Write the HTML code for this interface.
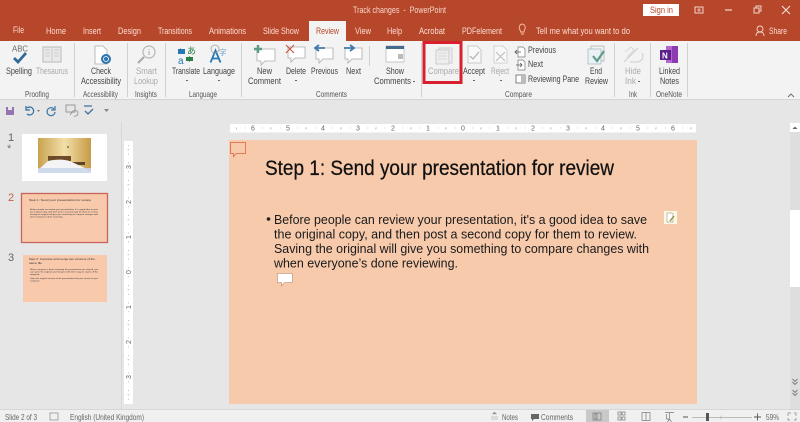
<!DOCTYPE html>
<html><head><meta charset="utf-8"><style>
html,body{margin:0;padding:0;background:#e6e6e6;overflow:hidden}
svg{display:block}
text{font-family:"Liberation Sans",sans-serif}
.t{font-size:9px;fill:#fbdcd2}
.r{font-size:9px;fill:#444}
.d{font-size:9px;fill:#aaa}
.g{font-size:8.5px;fill:#555}
.m{font-size:7px;fill:#666}
.s{font-size:8.5px;fill:#666}
.th{fill:#333}
</style></head><body>
<svg width="800" height="422" viewBox="0 0 800 422" xmlns="http://www.w3.org/2000/svg">
<defs><linearGradient id="w" x1="0" y1="0" x2="1" y2="0"><stop offset="0" stop-color="#c9a24f"/><stop offset=".5" stop-color="#f3dfa8"/><stop offset="1" stop-color="#c69a45"/></linearGradient></defs>
<rect width="800" height="422" fill="#e6e6e6"/>
<!-- title bar -->
<rect width="800" height="41" fill="#b7472a"/>
<text x="353" y="13" font-size="9.2" fill="#f6d5ca" textLength="93" lengthAdjust="spacingAndGlyphs" xml:space="preserve">Track changes  -  PowerPoint</text>
<rect x="643" y="4" width="36" height="12" fill="#fff"/>
<text x="650" y="13" font-size="9" fill="#b7472a" textLength="23" lengthAdjust="spacingAndGlyphs">Sign in</text>
<rect x="695" y="7" width="8" height="6" fill="none" stroke="#f3d6cc"/><path d="M697 10h4M699 8v4" stroke="#f3d6cc" stroke-width=".8"/>
<path d="M725 10h7" stroke="#f3d6cc" stroke-width="1.2"/>
<path d="M754 8h5v5h-5zM756 8V6h5v5h-2" fill="none" stroke="#f3d6cc"/>
<path d="M782 6l8 8M790 6l-8 8" stroke="#f6e0d8" stroke-width="1.1"/>
<!-- tabs -->
<rect x="309" y="21" width="37" height="20" fill="#f3f3f3"/>
<text class="t" x="13" y="33" textLength="11" lengthAdjust="spacingAndGlyphs">File</text>
<text class="t" x="46" y="34" textLength="20" lengthAdjust="spacingAndGlyphs">Home</text>
<text class="t" x="83" y="34" textLength="18" lengthAdjust="spacingAndGlyphs">Insert</text>
<text class="t" x="118" y="34" textLength="23" lengthAdjust="spacingAndGlyphs">Design</text>
<text class="t" x="158" y="34" textLength="34" lengthAdjust="spacingAndGlyphs">Transitions</text>
<text class="t" x="209" y="34" textLength="37" lengthAdjust="spacingAndGlyphs">Animations</text>
<text class="t" x="263" y="34" textLength="36" lengthAdjust="spacingAndGlyphs">Slide Show</text>
<text x="316" y="34" font-size="9" fill="#b7472a" textLength="23" lengthAdjust="spacingAndGlyphs">Review</text>
<text class="t" x="355" y="34" textLength="16" lengthAdjust="spacingAndGlyphs">View</text>
<text class="t" x="387" y="34" textLength="15" lengthAdjust="spacingAndGlyphs">Help</text>
<text class="t" x="419" y="34" textLength="26" lengthAdjust="spacingAndGlyphs">Acrobat</text>
<text class="t" x="462" y="34" textLength="40" lengthAdjust="spacingAndGlyphs">PDFelement</text>
<path d="M521 35h3M519.500 30a3 3.500 0 1 1 5.500 0c-.6 1-1 1.500-1 3h-3.500c0-1.500-.4-2-1-3z" fill="none" stroke="#f7c9a8" stroke-width=".9" transform="translate(0 -1)"/>
<text class="t" x="536" y="34" textLength="94" lengthAdjust="spacingAndGlyphs">Tell me what you want to do</text>
<circle cx="760" cy="29" r="3" fill="none" stroke="#f3d6cc" stroke-width=".9"/><path d="M756 36c0-3 2-4 4-4s4 1 4 4" fill="none" stroke="#f3d6cc" stroke-width=".9"/>
<text class="t" x="769" y="34" textLength="18" lengthAdjust="spacingAndGlyphs">Share</text>
<!-- ribbon -->
<rect y="41" width="800" height="58" fill="#f3f3f3"/>
<rect y="99" width="800" height="1" fill="#d4d4d4"/>
<g fill="#d0d0d0"><rect x="74" y="43" width="1" height="54"/><rect x="127" y="43" width="1" height="54"/><rect x="165" y="43" width="1" height="54"/><rect x="241" y="43" width="1" height="54"/><rect x="369" y="46" width="1" height="20"/><rect x="421" y="43" width="1" height="54"/><rect x="614" y="43" width="1" height="54"/><rect x="650" y="43" width="1" height="54"/><rect x="687" y="43" width="1" height="54"/></g>
<!-- ribbon labels -->
<text class="r" x="6" y="74" textLength="26" lengthAdjust="spacingAndGlyphs">Spelling</text>
<text class="d" x="36" y="74" textLength="32" lengthAdjust="spacingAndGlyphs">Thesaurus</text>
<text class="r" x="91" y="74" textLength="20" lengthAdjust="spacingAndGlyphs">Check</text>
<text class="r" x="81" y="84" textLength="40" lengthAdjust="spacingAndGlyphs">Accessibility</text>
<text class="d" x="136" y="74" textLength="21" lengthAdjust="spacingAndGlyphs">Smart</text>
<text class="d" x="134" y="84" textLength="24" lengthAdjust="spacingAndGlyphs">Lookup</text>
<text class="r" x="172" y="74" textLength="28" lengthAdjust="spacingAndGlyphs">Translate</text>
<text class="r" x="203" y="74" textLength="32" lengthAdjust="spacingAndGlyphs">Language</text>
<text class="r" x="257" y="74" textLength="15" lengthAdjust="spacingAndGlyphs">New</text>
<text class="r" x="248" y="84" textLength="33" lengthAdjust="spacingAndGlyphs">Comment</text>
<text class="r" x="286" y="74" textLength="20" lengthAdjust="spacingAndGlyphs">Delete</text>
<text class="r" x="311" y="74" textLength="27" lengthAdjust="spacingAndGlyphs">Previous</text>
<text class="r" x="346" y="74" textLength="15" lengthAdjust="spacingAndGlyphs">Next</text>
<text class="r" x="386" y="74" textLength="18" lengthAdjust="spacingAndGlyphs">Show</text>
<text class="r" x="374" y="84" textLength="37" lengthAdjust="spacingAndGlyphs">Comments</text>
<text class="d" x="428" y="74" textLength="31" lengthAdjust="spacingAndGlyphs">Compare</text>
<text class="r" x="463" y="74" textLength="22" lengthAdjust="spacingAndGlyphs">Accept</text>
<text class="d" x="491" y="74" textLength="18" lengthAdjust="spacingAndGlyphs">Reject</text>
<text class="r" x="528" y="53" textLength="28" lengthAdjust="spacingAndGlyphs">Previous</text>
<text class="r" x="528" y="67" textLength="15" lengthAdjust="spacingAndGlyphs">Next</text>
<text class="r" x="528" y="82" textLength="51" lengthAdjust="spacingAndGlyphs">Reviewing Pane</text>
<text class="r" x="590" y="74" textLength="12" lengthAdjust="spacingAndGlyphs">End</text>
<text class="r" x="585" y="84" textLength="23" lengthAdjust="spacingAndGlyphs">Review</text>
<text class="d" x="625" y="74" textLength="16" lengthAdjust="spacingAndGlyphs">Hide</text>
<text class="d" x="625" y="84" textLength="11" lengthAdjust="spacingAndGlyphs">Ink</text>
<text class="r" x="659" y="74" textLength="21" lengthAdjust="spacingAndGlyphs">Linked</text>
<text class="r" x="660" y="84" textLength="19" lengthAdjust="spacingAndGlyphs">Notes</text>
<text class="g" x="25" y="97" textLength="24" lengthAdjust="spacingAndGlyphs">Proofing</text>
<text class="g" x="83" y="97" textLength="35" lengthAdjust="spacingAndGlyphs">Accessibility</text>
<text class="g" x="135" y="97" textLength="22" lengthAdjust="spacingAndGlyphs">Insights</text>
<text class="g" x="189" y="97" textLength="28" lengthAdjust="spacingAndGlyphs">Language</text>
<text class="g" x="316" y="97" textLength="31" lengthAdjust="spacingAndGlyphs">Comments</text>
<text class="g" x="505" y="97" textLength="27" lengthAdjust="spacingAndGlyphs">Compare</text>
<text class="g" x="629" y="97" textLength="8" lengthAdjust="spacingAndGlyphs">Ink</text>
<text class="g" x="656" y="97" textLength="26" lengthAdjust="spacingAndGlyphs">OneNote</text>
<path d="M186 80h2v1h-2zM218 80h2v1h-2zM295 80h2v1h-2zM413 81h2v1h-2zM473 80h2v1h-2zM500 80h2v1h-2zM638 81h2v1h-2z" fill="#666"/>
<!-- proofing icons -->
<text x="12" y="51.500" font-size="8.500" fill="#666" textLength="16" lengthAdjust="spacingAndGlyphs">ABC</text>
<path d="M14 58l4 4 8-9" fill="none" stroke="#2f6a99" stroke-width="2.800"/>
<rect x="43" y="47" width="18" height="15" fill="#e9e9e9" stroke="#bbb"/><path d="M52 47v15M45 50h5M45 53h5M45 56h5M54 50h5M54 53h5M54 56h5" stroke="#c4c4c4" stroke-width=".8"/>
<path d="M95 46h8l4 4v14H95z" fill="#fff" stroke="#aaa" stroke-width=".8"/>
<circle cx="106" cy="59" r="5" fill="#2f75ad"/><circle cx="106" cy="59" r="2.500" fill="none" stroke="#fff" stroke-width=".8"/>
<circle cx="149" cy="52" r="6" fill="#f3f3f3" stroke="#b5b5b5" stroke-width="1.200"/><path d="M144 57l-6 6" stroke="#aaa" stroke-width="2"/><path d="M149 49v1M149 51v4" stroke="#aaa"/>
<!-- translate -->
<path d="M178 49h7v5h-7zM178 51l3-3v6z" fill="#2878b5"/><path d="M186 57h7v4h-7z" fill="#2a7d46"/><path d="M186 59l4-3v6z" fill="#2a7d46"/>
<text x="187" y="54" font-size="9" fill="#2a7d46" style="font-family:'Noto Sans CJK JP',sans-serif">あ</text>
<text x="178" y="64" font-size="10" fill="#2878b5">a</text>
<path d="M211 60l5-12 5 12M213 56h6" fill="none" stroke="#2878b5" stroke-width="1.800" transform="translate(-.5 2.500)"/>
<circle cx="215" cy="49" r="4" fill="none" stroke="#999" stroke-width=".7"/>
<text x="219" y="55" font-size="7.500" fill="#5b9bc8" style="font-family:'Noto Sans CJK JP',sans-serif">字</text>
<!-- comments -->
<path d="M257 49h18v12h-10l-4 4v-4h-4z" fill="#fff" stroke="#aaa" stroke-width=".8"/><path d="M258 45v8M254 49h8" stroke="#5a9d82" stroke-width="2.400"/>
<path d="M288 47h17v11h-10l-4 4v-4h-3z" fill="#fff" stroke="#aaa" stroke-width=".8"/><path d="M286 45l8 8M294 45l-8 8" stroke="#c8503c" stroke-width="1.100"/>
<path d="M316 48h17v11h-10l-4 4v-4h-3z" fill="#fff" stroke="#aaa" stroke-width=".8"/><path d="M325 48h-10M319 45l-4 3 4 3" fill="none" stroke="#3f79ab" stroke-width="1.800"/>
<path d="M345 48h17v11h-10l-4 4v-4h-3z" fill="#fff" stroke="#aaa" stroke-width=".8"/><path d="M344 48h10M350 45l4 3-4 3" fill="none" stroke="#3f79ab" stroke-width="1.800"/>
<rect x="386" y="46" width="18" height="16" fill="#fff" stroke="#bbb" stroke-width=".8"/><rect x="386" y="46" width="18" height="3" fill="#44698c"/><rect x="398" y="54" width="5" height="5" fill="#bbb"/>
<!-- compare -->
<rect x="439" y="48" width="13" height="15" fill="#eee" stroke="#ccc"/><rect x="436" y="50" width="13" height="14" fill="#eee" stroke="#ccc"/><path d="M438 53h9M438 56h9M438 59h9" stroke="#d4d4d4" stroke-width=".8"/>
<path d="M468 46h9l4 4v13h-13z" fill="#f8f8f8" stroke="#bdbdbd" stroke-width=".8"/><path d="M470 56l3 3 6-7" fill="none" stroke="#aaa" stroke-width="1.100"/>
<path d="M494 46h9l4 4v13h-13z" fill="#f8f8f8" stroke="#c8c8c8" stroke-width=".8"/><path d="M496 52l9 9M505 52l-9 9" stroke="#bbb" stroke-width="1"/>
<path d="M518 47h5l2 2v8h-7z" fill="#fff" stroke="#777" stroke-width=".7"/><path d="M515 52h6M517 50l-2 2 2 2" fill="none" stroke="#555" stroke-width=".8"/>
<path d="M518 60h5l2 2v8h-7z" fill="#fff" stroke="#777" stroke-width=".7"/><path d="M516 65h6M520 63l2 2-2 2" fill="none" stroke="#555" stroke-width=".8"/>
<rect x="516" y="75" width="9" height="8" fill="#fff" stroke="#666" stroke-width=".8"/><rect x="521" y="75" width="4" height="8" fill="#bbb"/>
<rect x="591" y="46" width="13" height="15" fill="#f2f2f2" stroke="#aaa" stroke-width=".7"/><rect x="588" y="49" width="13" height="15" fill="#eaf2f6" stroke="#9fb5c0" stroke-width=".7"/><path d="M593 56l4 5 7-10" fill="none" stroke="#5f9d8a" stroke-width="2.200"/>
<path d="M624 62l14-14M630 62h8a6 6 0 0 0 4-9" fill="none" stroke="#ccc" stroke-width="1"/><path d="M625 52l6-5 3 3-7 7" fill="none" stroke="#d0d0d0" stroke-width=".8"/>
<rect x="666" y="46" width="12" height="17" fill="#b565d0"/><rect x="672" y="46" width="6" height="17" fill="#8a3bb0"/><rect x="660" y="50" width="11" height="10" fill="#5c1f8c"/>
<text x="662" y="58.500" font-size="8" font-weight="bold" fill="#fff">N</text>
<path d="M788 97l3-3 3 3" fill="none" stroke="#666" stroke-width=".9"/>
<!-- red box -->
<rect x="424" y="42.500" width="37" height="40" fill="none" stroke="#d71f2e" stroke-width="3"/>
<!-- QAT -->
<rect x="6" y="107" width="8" height="8" fill="#7a4f9f" opacity=".75"/><rect x="8" y="107" width="4" height="3" fill="#e6e6e6"/>
<path d="M26 108a4 4 0 1 1 0 6M25 106v4h4" fill="none" stroke="#2f6a9f" stroke-width="1.200" transform="translate(1 0)"/><path d="M37 110h3l-1.500 2z" fill="#777"/>
<path d="M54 109a4 4 0 1 0 1 3M55 106v4h-4" fill="none" stroke="#3a78a8" stroke-width="1.200"/>
<rect x="66" y="105" width="9" height="7" fill="none" stroke="#888" stroke-width=".8"/><path d="M70 115l2-3M74 116a3 3 0 1 0-2-3" fill="none" stroke="#888" stroke-width=".7"/>
<path d="M84 106h8M85 111l3 3 5-5" fill="none" stroke="#3f6f99" stroke-width="1.300"/>
<path d="M104 107h5M104 109h5l-2.500 3z" fill="#888"/>
<!-- left pane divider -->
<rect x="121" y="122" width="1" height="288" fill="#d8d8d8"/>
<!-- thumbnails -->
<text x="8" y="141" font-size="11" fill="#666">1</text><text x="7" y="152" font-size="11" fill="#777">*</text>
<text x="8" y="201" font-size="11" fill="#c0634a">2</text>
<text x="8" y="261" font-size="11" fill="#666">3</text>
<rect x="22" y="134" width="85" height="47" fill="#fff"/>
<rect x="38" y="138" width="53" height="35" fill="url(#w)"/>
<rect x="48" y="156" width="23" height="5" fill="#6d4a28"/><rect x="72" y="162" width="13" height="3" fill="#5e4526"/>
<path d="M38 170l10-9c8-2 18-2 24 1l19 9v2H38z" fill="#f4f4f6"/><rect x="38" y="168" width="53" height="5" fill="#c8d6ea" opacity=".85"/>
<circle cx="68" cy="147" r=".8" fill="#333"/>
<rect x="21.500" y="193.500" width="86" height="49" fill="#f9c9ac" stroke="#c8655a" stroke-width="1.300"/>
<text class="th" x="29" y="201" font-size="3.100" textLength="62" lengthAdjust="spacingAndGlyphs">Step 1: Send your presentation for review</text>
<g font-size="1.700"><text class="th" x="30" y="210" textLength="68" lengthAdjust="spacingAndGlyphs">Before people can review your presentation, it's a good idea to save</text>
<text class="th" x="30" y="212.500" textLength="68" lengthAdjust="spacingAndGlyphs">the original copy, and then post a second copy for them to review.</text>
<text class="th" x="30" y="215" textLength="68" lengthAdjust="spacingAndGlyphs">Saving the original will give you something to compare changes with</text>
<text class="th" x="30" y="217.500" textLength="33" lengthAdjust="spacingAndGlyphs">when everyone's done reviewing.</text></g>
<rect x="23" y="255" width="84" height="47" fill="#f9c9ac"/>
<text class="th" x="29" y="260" font-size="3.100" textLength="66" lengthAdjust="spacingAndGlyphs">Step 2: Compare and merge two versions of the</text>
<text class="th" x="29" y="264" font-size="3.100" textLength="13" lengthAdjust="spacingAndGlyphs">same file</text>
<g font-size="1.700"><text class="th" x="30" y="270" textLength="68" lengthAdjust="spacingAndGlyphs">When everyone is done reviewing the presentation you shared, you</text>
<text class="th" x="30" y="272.500" textLength="68" lengthAdjust="spacingAndGlyphs">can open the original and merge it with their copy or copies of the</text>
<text class="th" x="30" y="275" textLength="10" lengthAdjust="spacingAndGlyphs">original.</text>
<text class="th" x="30" y="279" textLength="68" lengthAdjust="spacingAndGlyphs">Open the original version of the presentation that you saved on your</text>
<text class="th" x="30" y="281.500" textLength="10" lengthAdjust="spacingAndGlyphs">computer.</text></g>
<!-- rulers -->
<rect x="230" y="124" width="466" height="8.500" fill="#fff"/>
<rect x="124" y="141" width="9" height="263" fill="#fff"/>
<g text-anchor="middle"><text class="m" x="253" y="130.500">6</text><text class="m" x="288" y="130.500">5</text><text class="m" x="323" y="130.500">4</text><text class="m" x="358" y="130.500">3</text><text class="m" x="393" y="130.500">2</text><text class="m" x="428" y="130.500">1</text><text class="m" x="463" y="130.500">0</text><text class="m" x="498" y="130.500">1</text><text class="m" x="533" y="130.500">2</text><text class="m" x="568" y="130.500">3</text><text class="m" x="603" y="130.500">4</text><text class="m" x="638" y="130.500">5</text><text class="m" x="673" y="130.500">6</text></g>
<path stroke="#999" stroke-width=".6" stroke-dasharray="1 7.750" d="M236 128H696"/>
<path stroke="#aaa" stroke-width="2" stroke-dasharray=".6 34.400" d="M270.500 128.500H696M236 128.500h1"/>
<g text-anchor="middle"><text class="m" transform="translate(131 167) rotate(-90)">3</text><text class="m" transform="translate(131 202) rotate(-90)">2</text><text class="m" transform="translate(131 237) rotate(-90)">1</text><text class="m" transform="translate(131 272) rotate(-90)">0</text><text class="m" transform="translate(131 307) rotate(-90)">1</text><text class="m" transform="translate(131 342) rotate(-90)">2</text><text class="m" transform="translate(131 377) rotate(-90)">3</text></g>
<path stroke="#999" stroke-width=".6" stroke-dasharray="1 7.750" d="M128.500 145V403"/>
<path stroke="#aaa" stroke-width="2" stroke-dasharray=".6 34.400" d="M128.500 149.500V403"/>
<!-- slide -->
<rect x="229" y="140" width="468" height="264" fill="#f7caac"/>
<path d="M230.500 142.500h15v11h-9l-3 3v-3h-3z" fill="none" stroke="#e0795a" stroke-width="1"/>
<text x="265" y="175" font-size="21" fill="#111" stroke="#111" stroke-width=".25" textLength="349" lengthAdjust="spacingAndGlyphs">Step 1: Send your presentation for review</text>
<circle cx="268.500" cy="219" r="1.800" fill="#222"/>
<g font-size="13" fill="#1a1a1a">
<text x="274" y="224" textLength="373" lengthAdjust="spacingAndGlyphs">Before people can review your presentation, it's a good idea to save</text>
<text x="274" y="238.500" textLength="363" lengthAdjust="spacingAndGlyphs">the original copy, and then post a second copy for them to review.</text>
<text x="274" y="253" textLength="375" lengthAdjust="spacingAndGlyphs">Saving the original will give you something to compare changes with</text>
<text x="274" y="267.500" textLength="184" lengthAdjust="spacingAndGlyphs">when everyone’s done reviewing.</text>
</g>
<path d="M277.500 273.500h15v9h-8l-3 3.500v-3.500h-4z" fill="#fff" stroke="#c9a08a" stroke-width=".8"/>
<rect x="664" y="211" width="13" height="13" fill="#fdf8e6"/>
<path d="M667 213h5l1 1v8h-6z" fill="#fff" stroke="#a8a890" stroke-width=".7"/><path d="M670 221l4-5" stroke="#7f8f3a" stroke-width="1.300"/>
<!-- scrollbar -->
<rect x="790" y="123" width="10" height="287" fill="#dedede"/>
<rect x="790" y="123" width="10" height="9" fill="#fff"/><path d="M792.500 129l2.500-2.500 2.500 2.500z" fill="#666"/>
<rect x="790" y="210" width="10" height="77" fill="#fff"/>
<path d="M792.500 379l2.500 2.500 2.500-2.500M792.500 382l2.500 2.500 2.500-2.500M792.500 390l2.500 2.500 2.500-2.500M792.500 393l2.500 2.500 2.500-2.500" fill="none" stroke="#777" stroke-width=".9"/>
<!-- status -->
<rect y="409" width="800" height="1" fill="#d6d6d6"/>
<rect y="410" width="800" height="12" fill="#f0f0f0"/>
<text class="s" x="5" y="420" textLength="32" lengthAdjust="spacingAndGlyphs">Slide 2 of 3</text>
<rect x="50" y="413" width="8" height="7" fill="none" stroke="#888" stroke-width=".7"/>
<text class="s" x="70" y="420" textLength="74" lengthAdjust="spacingAndGlyphs">English (United Kingdom)</text>
<path d="M491 419h7M491 417h7M494.500 412l-2 2h4z" stroke="#999" stroke-width=".6" fill="#999"/>
<text class="s" x="502" y="420" textLength="16" lengthAdjust="spacingAndGlyphs">Notes</text>
<path d="M531 414h8v5h-5l-2 2v-2h-1z" fill="#666"/>
<text class="s" x="541" y="420" textLength="32" lengthAdjust="spacingAndGlyphs">Comments</text>
<rect x="586" y="410" width="23" height="12" fill="#c8c8c8"/>
<g fill="none" stroke="#777" stroke-width=".7"><rect x="593" y="413" width="8" height="7"/><rect x="595" y="414" width="2" height="5"/>
<rect x="618" y="412" width="3" height="3"/><rect x="622" y="412" width="3" height="3"/><rect x="618" y="417" width="3" height="3"/><rect x="622" y="417" width="3" height="3"/>
<rect x="642" y="412.500" width="8" height="8"/><path d="M646 412.500v8M665 412.500h9M669.500 413v6h-3v-5M669.500 419l-2 3M669.500 419l2 3"/></g>
<path d="M683 417h5M754 417h7M757.500 413.500v7" stroke="#555" stroke-width=".9"/>
<path d="M692 417.500h60" stroke="#aaa" stroke-width=".7"/><rect x="706" y="413" width="3" height="8" fill="#555"/><path d="M721 415.500v4" stroke="#aaa" stroke-width=".6"/>
<text class="s" x="766" y="420" textLength="13" lengthAdjust="spacingAndGlyphs">59%</text>
<path d="M788 416v-3h3M794 413h2v3M796 418v2h-2M790 420h-2v-2" fill="none" stroke="#888" stroke-width=".7"/>
</svg>
</body></html>
